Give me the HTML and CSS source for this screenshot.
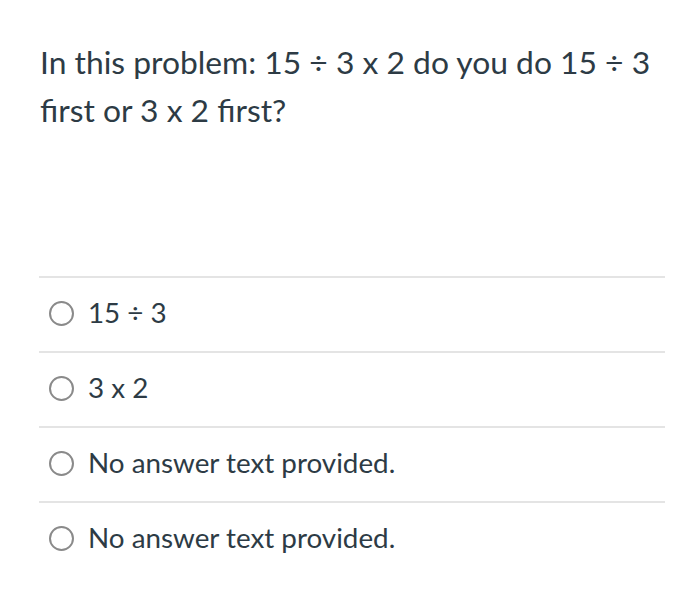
FILE: index.html
```html
<!DOCTYPE html>
<html>
<head>
<meta charset="utf-8">
<link rel="stylesheet" href="styles.css">
</head>
<body>
<div class="quiz">
  <div class="question">In this problem: 15 ÷ 3 x 2 do you do 15 ÷ 3 first or 3 x 2 first?</div>
  <div class="answers">
    <div class="answer"><span class="radio"></span><span class="label">15 ÷ 3</span></div>
    <div class="answer"><span class="radio"></span><span class="label">3 x 2</span></div>
    <div class="answer"><span class="radio"></span><span class="label">No answer text provided.</span></div>
    <div class="answer"><span class="radio"></span><span class="label">No answer text provided.</span></div>
  </div>
</div>
</body>
</html>
```
FILE: styles.css
```css
html, body {
  margin: 0;
  padding: 0;
  background: #ffffff;
}
.quiz {
  font-family: Lato, "Liberation Sans", sans-serif;
  color: #2d3b45;
  padding: 38px 35px 0 39px;
}
.question {
  font-size: 31.8px;
  line-height: 48px;
  padding-left: 1px;
  height: 238px;
}
.answers {
  display: flex;
  flex-direction: column;
}
.answer {
  display: flex;
  align-items: center;
  height: 73px;
  border-top: 2px solid #e4e4e4;
  padding-left: 10px;
  gap: 14px;
}
.radio {
  width: 25px;
  height: 25px;
  border: 2.5px solid #8a8a8a;
  border-radius: 50%;
  box-sizing: border-box;
  flex: none;
  margin-bottom: 2px;
}
.label {
  font-size: 27.8px;
  padding-bottom: 4px;
}
```
